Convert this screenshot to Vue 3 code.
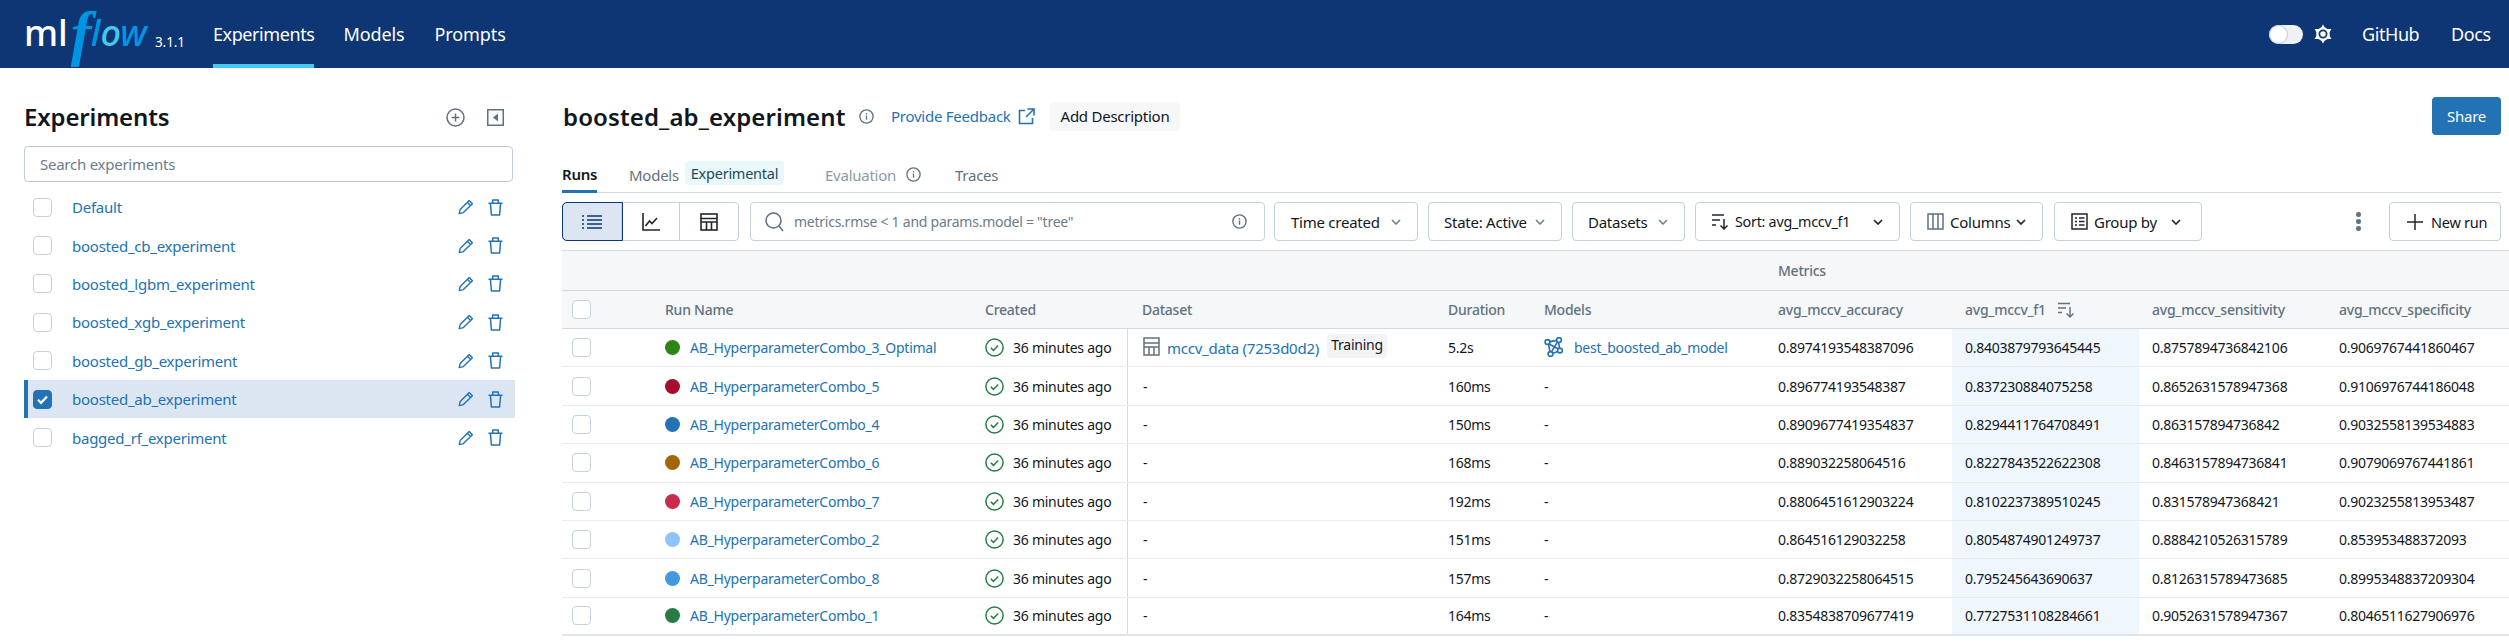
<script setup>
const experiments = [
  { name: 'Default' },
  { name: 'boosted_cb_experiment' },
  { name: 'boosted_lgbm_experiment' },
  { name: 'boosted_xgb_experiment' },
  { name: 'boosted_gb_experiment' },
  { name: 'boosted_ab_experiment', selected: true },
  { name: 'bagged_rf_experiment' }
]
const runs = [
  { name: 'AB_HyperparameterCombo_3_Optimal', color: '#2e8412', duration: '5.2s', first: true, m: ['0.8974193548387096', '0.8403879793645445', '0.8757894736842106', '0.9069767441860467'] },
  { name: 'AB_HyperparameterCombo_5', color: '#a50f2d', duration: '160ms', m: ['0.896774193548387', '0.837230884075258', '0.8652631578947368', '0.9106976744186048'] },
  { name: 'AB_HyperparameterCombo_4', color: '#2272b4', duration: '150ms', m: ['0.8909677419354837', '0.8294411764708491', '0.863157894736842', '0.9032558139534883'] },
  { name: 'AB_HyperparameterCombo_6', color: '#a4640a', duration: '168ms', m: ['0.889032258064516', '0.8227843522622308', '0.8463157894736841', '0.9079069767441861'] },
  { name: 'AB_HyperparameterCombo_7', color: '#c92b4b', duration: '192ms', m: ['0.8806451612903224', '0.8102237389510245', '0.831578947368421', '0.9023255813953487'] },
  { name: 'AB_HyperparameterCombo_2', color: '#8cc4fb', duration: '151ms', m: ['0.864516129032258', '0.8054874901249737', '0.8884210526315789', '0.853953488372093'] },
  { name: 'AB_HyperparameterCombo_8', color: '#4299e0', duration: '157ms', m: ['0.8729032258064515', '0.795245643690637', '0.8126315789473685', '0.8995348837209304'] },
  { name: 'AB_HyperparameterCombo_1', color: '#277c43', duration: '164ms', m: ['0.8354838709677419', '0.7727531108284661', '0.9052631578947367', '0.8046511627906976'] }
]
</script>

<template>
  <div class="page">
    <header class="topbar">
      <div class="logo">
        <span class="ml">ml</span><span class="flow-f">f</span><span class="flow">l<span class="flow-o">o</span>w</span>
      </div>
      <span class="version">3.1.1</span>
      <nav class="nav">
        <a class="nav-item active">Experiments</a>
        <a class="nav-item">Models</a>
        <a class="nav-item">Prompts</a>
      </nav>
      <div class="top-right">
        <span class="toggle"><span class="knob"></span></span>
        <svg class="gear" width="20" height="20" viewBox="0 0 20 20">
          <polygon points="10,0.5 18.4,15 1.6,15" fill="#fff" />
          <polygon points="10,19.5 18.4,5 1.6,5" fill="#fff" />
          <circle cx="10" cy="10" r="6.8" fill="#fff" />
          <circle cx="10" cy="10" r="3.6" fill="none" stroke="#0e3574" stroke-width="1.8" />
        </svg>
        <a class="top-link github">GitHub</a>
        <a class="top-link docs">Docs</a>
      </div>
    </header>

    <div class="body">
      <aside class="sidebar">
        <div class="side-head">
          <h2 class="side-title">Experiments</h2>
          <svg width="19" height="19" viewBox="0 0 19 19" fill="none" stroke="#5f7281" stroke-width="1.5">
            <circle cx="9.5" cy="9.5" r="8.5" />
            <path d="M9.5 5.5v8M5.5 9.5h8" />
          </svg>
          <svg class="collapse" width="17" height="17" viewBox="0 0 17 17">
            <rect x="0.75" y="0.75" width="15.5" height="15.5" fill="none" stroke="#5f7281" stroke-width="1.5" />
            <path d="M11 4.5v8l-5-4z" fill="#5f7281" />
          </svg>
        </div>
        <div class="side-search">Search experiments</div>
        <div class="exp-list">
          <div v-for="e in experiments" :key="e.name" class="exp-row" :class="{ selected: e.selected }">
            <span class="cb" :class="{ checked: e.selected }">
              <svg v-if="e.selected" width="13" height="13" viewBox="0 0 13 13" fill="none" stroke="#fff" stroke-width="2.2"><path d="M2 6.8l3 3 6-6.4" /></svg>
            </span>
            <a class="exp-name">{{ e.name }}</a>
            <span class="exp-actions">
              <svg width="16" height="16" viewBox="0 0 16 16" fill="none" stroke="#2272b4" stroke-width="1.4" stroke-linejoin="round">
                <path d="M11.2 1.6l3.2 3.2-9 8.8-4.2 1 1-4.2z" />
                <path d="M9.6 3.4l3 3" />
              </svg>
              <svg width="15" height="17" viewBox="0 0 15 17" fill="none" stroke="#2272b4" stroke-width="1.5" stroke-linejoin="round">
                <path d="M4.7 4V1h5.6v3M0.5 4.2h14M2.4 4.2l1 11.8h8.2l1-11.8" />
              </svg>
            </span>
          </div>
        </div>
      </aside>

      <main class="main">
        <div class="title-row">
          <h1 class="title">boosted_ab_experiment</h1>
          <svg class="title-info" width="15" height="15" viewBox="0 0 15 15" fill="none" stroke="#5f7281" stroke-width="1.3">
            <circle cx="7.5" cy="7.5" r="6.6" /><path d="M7.5 6.5v4.2M7.5 4v1.6" />
          </svg>
          <a class="feedback">Provide Feedback</a>
          <svg class="ext" width="17" height="17" viewBox="0 0 17 17" fill="none" stroke="#2272b4" stroke-width="1.6">
            <path d="M7 2.5H1.5v13h13V10M9.5 1h6.5v6.5M16 1L8 9" />
          </svg>
          <span class="add-desc">Add Description</span>
          <button class="share">Share</button>
        </div>

        <div class="tabs">
          <span class="tab tab-active">Runs</span>
          <span class="tab tab-models">Models</span>
          <span class="exp-tag">Experimental</span>
          <span class="tab tab-eval">Evaluation</span>
          <svg class="eval-info" width="15" height="15" viewBox="0 0 15 15" fill="none" stroke="#5f7281" stroke-width="1.3">
            <circle cx="7.5" cy="7.5" r="6.6" /><path d="M7.5 6.5v4.2M7.5 4v1.6" />
          </svg>
          <span class="tab tab-traces">Traces</span>
        </div>

        <div class="toolbar">
          <div class="seg-group">
            <span class="seg seg-on">
              <svg width="20" height="16" viewBox="0 0 20 16" fill="none" stroke="#0e3574" stroke-width="1.6">
                <path d="M5 2h15M5 6h15M5 10h15M5 14h15" />
                <path d="M0 2h2M0 6h2M0 10h2M0 14h2" />
              </svg>
            </span>
            <span class="seg">
              <svg width="18" height="18" viewBox="0 0 18 18" fill="none" stroke="#1f272d" stroke-width="1.6">
                <path d="M1 0v17h17" />
                <path d="M3.5 13l4-5 2.5 2.5 5-5.5" />
              </svg>
            </span>
            <span class="seg">
              <svg width="18" height="18" viewBox="0 0 18 18" fill="none" stroke="#1f272d" stroke-width="1.6">
                <rect x="1" y="1" width="16" height="16" />
                <path d="M1 5.5h16M1 9h16M6.5 9v8M11.5 9v8" />
              </svg>
            </span>
          </div>
          <div class="run-search">
            <svg width="19" height="20" viewBox="0 0 19 20" fill="none" stroke="#5f7281" stroke-width="1.6">
              <circle cx="8.5" cy="8.5" r="7.5" /><path d="M14 14l4 5" />
            </svg>
            <span class="search-text">metrics.rmse &lt; 1 and params.model = "tree"</span>
            <svg class="search-info" width="15" height="15" viewBox="0 0 15 15" fill="none" stroke="#5f7281" stroke-width="1.4">
              <circle cx="7.5" cy="7.5" r="6.6" /><path d="M7.5 6.5v4.2M7.5 4v1.6" />
            </svg>
          </div>
          <button class="btn w-time">Time created
            <svg class="chev" width="10" height="6" viewBox="0 0 10 6" fill="none" stroke="#6b7c8a" stroke-width="1.5"><path d="M1 1l4 4 4-4" /></svg>
          </button>
          <button class="btn w-state">State: Active
            <svg class="chev" width="10" height="6" viewBox="0 0 10 6" fill="none" stroke="#6b7c8a" stroke-width="1.5"><path d="M1 1l4 4 4-4" /></svg>
          </button>
          <button class="btn w-data">Datasets
            <svg class="chev" width="10" height="6" viewBox="0 0 10 6" fill="none" stroke="#6b7c8a" stroke-width="1.5"><path d="M1 1l4 4 4-4" /></svg>
          </button>
          <button class="btn w-sort">
            <svg width="17" height="17" viewBox="0 0 17 17" fill="none" stroke="#1f272d" stroke-width="1.5">
              <path d="M0 2h12M0 7h8M0 12h4M12 6v10M8.5 12.5l3.5 3.5 3.5-3.5" />
            </svg>
            <span>Sort: avg_mccv_f1</span>
            <svg class="chev" width="10" height="6" viewBox="0 0 10 6" fill="none" stroke="#1f272d" stroke-width="1.7"><path d="M1 1l4 4 4-4" /></svg>
          </button>
          <button class="btn w-cols">
            <svg width="17" height="17" viewBox="0 0 17 17" fill="none" stroke="#5f7281" stroke-width="1.5">
              <rect x="1" y="1" width="15" height="15" /><path d="M6 1v15M11 1v15" />
            </svg>
            <span>Columns</span>
            <svg class="chev chev-cols" width="10" height="6" viewBox="0 0 10 6" fill="none" stroke="#1f272d" stroke-width="1.7"><path d="M1 1l4 4 4-4" /></svg>
          </button>
          <button class="btn w-group">
            <svg width="17" height="17" viewBox="0 0 17 17" fill="none" stroke="#1f272d" stroke-width="1.5">
              <rect x="1" y="1" width="15" height="15" /><path d="M4 5h2M8 5h5.5M4 8.5h2M8 8.5h5.5M4 12h2M8 12h5.5" />
            </svg>
            <span>Group by</span>
            <svg class="chev chev-group" width="10" height="6" viewBox="0 0 10 6" fill="none" stroke="#1f272d" stroke-width="1.7"><path d="M1 1l4 4 4-4" /></svg>
          </button>
          <span class="kebab"><i></i><i></i><i></i></span>
          <button class="btn w-new">
            <svg width="18" height="18" viewBox="0 0 18 18" fill="none" stroke="#1f272d" stroke-width="1.5"><path d="M9 1v16M1 9h16" /></svg>
            <span>New run</span>
          </button>
        </div>

        <div class="table">
          <div class="group-row"><span class="metrics-label">Metrics</span></div>
          <div class="grid head-row">
            <span class="cell"><span class="cb cb-head"></span></span>
            <span class="cell">Run Name</span>
            <span class="cell">Created</span>
            <span class="cell cell-data">Dataset</span>
            <span class="cell">Duration</span>
            <span class="cell">Models</span>
            <span class="cell">avg_mccv_accuracy</span>
            <span class="cell">avg_mccv_f1
              <svg class="head-sort" width="17" height="16" viewBox="0 0 17 16" fill="none" stroke="#5f7281" stroke-width="1.4">
                <path d="M0 1.5h12M0 6h8M0 10.5h4M12 5v10M8.5 11.5l3.5 3.5 3.5-3.5" />
              </svg>
            </span>
            <span class="cell">avg_mccv_sensitivity</span>
            <span class="cell">avg_mccv_specificity</span>
          </div>
          <div v-for="r in runs" :key="r.name" class="grid run-row">
            <span class="cell"><span class="cb cb-head"></span></span>
            <span class="cell">
              <i class="dot" :style="{ background: r.color }"></i>
              <a class="link">{{ r.name }}</a>
            </span>
            <span class="cell">
              <svg class="ok" width="19" height="19" viewBox="0 0 19 19" fill="none" stroke="#277c43" stroke-width="1.5">
                <circle cx="9.5" cy="9.5" r="8.6" /><path d="M5.8 9.8l2.6 2.6 4.8-5" />
              </svg>
              36 minutes ago
            </span>
            <span class="cell cell-data divider">
              <template v-if="r.first">
                <svg class="table-ico" width="17" height="19" viewBox="0 0 17 19" fill="none" stroke="#5f7281" stroke-width="1.5">
                  <rect x="1" y="1" width="15" height="17" /><path d="M1 6h15M1 10h15M6 10v8M11 10v8" />
                </svg>
                <a class="link data-link">mccv_data (7253d0d2)</a>
                <span class="ctx">Training</span>
              </template>
              <template v-else>-</template>
            </span>
            <span class="cell">{{ r.duration }}</span>
            <span class="cell">
              <template v-if="r.first">
                <svg class="model-ico" width="19" height="20" viewBox="0 0 19 20" fill="none" stroke="#2272b4" stroke-width="1.6">
                  <circle cx="3.5" cy="5" r="2.4" /><circle cx="15" cy="3" r="2.4" /><circle cx="16" cy="13.5" r="2.4" /><circle cx="6.5" cy="17" r="2.4" />
                  <path d="M5.8 4.6l6.9-1.2M5 7l9.5 5M14.6 5.3l.9 5.8M13.8 14.4l-5 1.8M4.5 7.3l1.5 7.3M13.5 4.8l-6 10" />
                </svg>
                <a class="link">best_boosted_ab_model</a>
              </template>
              <template v-else>-</template>
            </span>
            <span class="cell">{{ r.m[0] }}</span>
            <span class="cell sorted">{{ r.m[1] }}</span>
            <span class="cell">{{ r.m[2] }}</span>
            <span class="cell">{{ r.m[3] }}</span>
          </div>
        </div>
      </main>
    </div>
  </div>
</template>

<style>
html, body { margin: 0; overflow: hidden; background: #fff; }
</style>

<style scoped>
.page {
  width: 2509px;
  height: 643px;
  overflow: hidden;
  font-family: "Noto Sans", "Open Sans", sans-serif;
  font-size: 14px;
  letter-spacing: -0.25px;
  color: #11171c;
}
a { color: #2272b4; }
svg { flex: none; display: block; }

/* Top bar */
.topbar {
  height: 68px;
  background: #0e3574;
  display: flex;
  align-items: center;
  color: #fff;
  box-sizing: border-box;
  padding-left: 24px;
  padding-right: 17px;
}
.logo { width: 123px; height: 68px; display: flex; align-items: center; letter-spacing: 0; white-space: nowrap; }
.ml { font-size: 36px; font-weight: 500; color: #fff; line-height: 1; margin-top: -3px; }
.flow-f {
  font-family: "Liberation Serif", serif;
  font-style: italic;
  font-weight: 700;
  font-size: 62px;
  line-height: 1;
  color: #0194e2;
  margin-left: 3px;
  margin-top: -2px;
  width: 20px;
}
.flow { font-size: 36px; font-style: italic; font-weight: 500; color: #0194e2; line-height: 1; margin-top: -3px; }
.flow-o { color: #43c9ed; }
.version { font-size: 13.5px; margin-left: 8px; margin-top: 15px; letter-spacing: -0.1px; width: 30px; }
.nav { display: flex; margin-left: 28px; height: 68px; }
.nav-item {
  color: #fff;
  font-size: 18px;
  letter-spacing: -0.1px;
  line-height: 68px;
  margin-right: 30px;
  box-sizing: border-box;
  height: 68px;
}
.nav-item.active { border-bottom: 4px solid #43c9ed; letter-spacing: -0.42px; margin-right: 29px; }
.top-right { margin-left: auto; display: flex; align-items: center; }
.toggle {
  width: 34px;
  height: 19px;
  border-radius: 10px;
  background: #eef1f5;
  display: block;
  position: relative;
}
.knob {
  position: absolute;
  left: 0;
  top: 0;
  width: 17px;
  height: 17px;
  border: 1px solid #bcc9d6;
  background: #fff;
  border-radius: 50%;
}
.gear { margin-left: 10px; }
.top-link { color: #fff; font-size: 18px; letter-spacing: -0.42px; white-space: nowrap; }
.github { margin-left: 29px; margin-right: 30px; width: 59px; }
.docs { width: 41px; }

/* Body */
.body { display: flex; }

.sidebar { width: 562px; flex: none; box-sizing: border-box; padding: 33px 0 0 24px; }
.side-head { width: 480px; height: 32px; display: flex; align-items: center; }
.side-title { font-size: 24px; font-weight: 600; margin: 0; flex: 1; letter-spacing: -0.15px; line-height: 32px; }
.collapse { margin-left: 22px; }
.side-search {
  width: 489px;
  height: 36px;
  margin-top: 13px;
  box-sizing: border-box;
  border: 1px solid #c0cdd8;
  border-radius: 4px;
  line-height: 34px;
  padding-left: 15px;
  color: #6b7c8a;
  font-size: 15px;
}
.exp-list { margin-top: 6px; width: 491px; }
.exp-row {
  height: 38.4px;
  display: flex;
  align-items: center;
  box-sizing: border-box;
  padding: 0 12px 0 9px;
}
.exp-row.selected { background: #dbe6f2; border-left: 4px solid #2272b4; padding-left: 5px; }
.cb {
  width: 19px;
  height: 19px;
  box-sizing: border-box;
  border: 1.5px solid #c4d0dc;
  border-radius: 4px;
  background: #fff;
  flex: none;
  display: flex;
  align-items: center;
  justify-content: center;
}
.cb.checked { background: #2272b4; border-color: #2272b4; }
.exp-name { margin-left: 20px; font-size: 15px; }
.exp-actions { margin-left: auto; display: flex; align-items: center; gap: 14px; }

/* Main */
.main { width: 1939px; flex: none; padding-top: 29px; box-sizing: border-box; }
.title-row { height: 38px; display: flex; align-items: center; padding-left: 1px; }
.title { font-size: 24px; font-weight: 600; margin: 0; letter-spacing: 0.12px; width: 285px; white-space: nowrap; }
.title-info { margin-left: 11px; }
.feedback { margin-left: 17px; width: 121px; white-space: nowrap; font-size: 15px; }
.ext { margin-left: 6px; }
.add-desc {
  margin-left: 15px;
  width: 130px;
  height: 29px;
  background: #f6f7f9;
  border-radius: 4px;
  text-align: center;
  line-height: 29px;
  white-space: nowrap;
  font-size: 15px;
}
.share {
  margin-left: auto;
  width: 69px;
  height: 38px;
  background: #2272b4;
  color: #fff;
  border: 0;
  border-radius: 4px;
  font: inherit;
  font-size: 15px;
  letter-spacing: inherit;
}
.tabs {
  height: 58px;
  box-sizing: border-box;
  border-bottom: 1px solid #d1d9e1;
  display: flex;
  align-items: flex-end;
  position: relative;
  font-size: 15px;
}
.tab { line-height: 20px; padding-bottom: 7px; color: #5f7281; white-space: nowrap; }
.tab-active { color: #11171c; font-weight: 600; width: 35px; margin-bottom: -1px; padding-bottom: 6px; border-bottom: 3px solid #2272b4; }
.tab-models { margin-left: 32px; width: 56px; }
.exp-tag {
  width: 99px;
  height: 24px;
  margin-bottom: 7px;
  background: #e8f8fb;
  border-radius: 4px;
  line-height: 24px;
  text-align: center;
  color: #1f4a56;
  white-space: nowrap;
  font-size: 14.5px;
}
.tab-eval { margin-left: 41px; color: #8c9aa6; width: 82px; }
.eval-info { margin-bottom: 10px; margin-left: -1px; }
.tab-traces { margin-left: 34px; }

.toolbar { display: flex; align-items: center; margin-top: 9px; height: 39px; padding-right: 8px; }
.seg-group { display: flex; width: 177px; height: 39px; box-sizing: border-box; border: 1px solid #c4d0dc; border-radius: 4px; flex: none; }
.seg {
  flex: 1;
  display: flex;
  align-items: center;
  justify-content: center;
  border-right: 1px solid #c4d0dc;
}
.seg:last-child { border-right: 0; }
.seg-on { background: #dbe6f2; outline: 1px solid #0e3574; border-radius: 4px 0 0 4px; }
.run-search {
  margin-left: 11px;
  width: 515px;
  height: 39px;
  box-sizing: border-box;
  border: 1px solid #c4d0dc;
  border-radius: 4px;
  display: flex;
  align-items: center;
  padding-left: 14px;
  flex: none;
}
.search-text { margin-left: 10px; color: #6b7c8a; white-space: nowrap; }
.search-info { margin-left: auto; margin-right: 17px; }
.btn {
  height: 39px;
  box-sizing: border-box;
  background: #fff;
  border: 1px solid #c4d0dc;
  border-radius: 4px;
  font: inherit;
  font-size: 15px;
  letter-spacing: inherit;
  color: #11171c;
  display: flex;
  align-items: center;
  padding: 0 0 0 16px;
  white-space: nowrap;
  flex: none;
  margin-left: 10px;
}
.chev { margin-left: auto; margin-right: 16px; }
.w-time { width: 144px; margin-left: 9px; }
.w-state { width: 134px; padding-left: 15px; }
.w-data { width: 113px; padding-left: 15px; }
.w-sort { width: 205px; gap: 6px; font-size: 14.3px; }
.w-cols { width: 133px; gap: 6px; }
.chev-cols { margin-left: 0; }
.w-group { width: 148px; gap: 6px; margin-left: 11px; }
.chev-group { margin-right: 20px; }
.kebab { display: flex; flex-direction: column; gap: 2.5px; margin-left: 154px; width: 5px; flex: none; align-items: center; }
.kebab i { width: 4.5px; height: 4.5px; border-radius: 50%; background: #5f7281; display: block; }
.w-new { width: 112px; margin-left: 28px; gap: 7px; font-size: 14.5px; }

.table { margin-top: 9px; width: 1947px; overflow: hidden; }
.group-row {
  height: 41px;
  box-sizing: border-box;
  background: #f6f7f9;
  border-top: 1px solid #d1d9e1;
  border-bottom: 1px solid #d1d9e1;
  padding-left: 1216px;
  line-height: 39px;
  color: #5f7281;
  font-weight: 500;
}
.grid {
  display: grid;
  grid-template-columns: 90px 320px 155px 308px 96px 234px 187px 187px 187px 187px;
  box-sizing: border-box;
  width: 2000px;
}
.cell {
  display: flex;
  align-items: center;
  padding-left: 13px;
  white-space: nowrap;
  min-width: 0;
}
.cell-data { padding-left: 15px; }
.head-row {
  height: 38px;
  background: #f6f7f9;
  border-bottom: 1px solid #d1d9e1;
  color: #5f7281;
  font-weight: 500;
}
.head-row .cell:first-child, .run-row .cell:first-child { padding-left: 10px; }
.head-sort { margin-left: 12px; }
.run-row { height: 38.4px; border-bottom: 1px solid #e8ecf0; }
.run-row:last-child { border-bottom: 2px solid #dfe5eb; }
.divider { border-left: 1px solid #d1d9e1; }
.dot { width: 15px; height: 15px; border-radius: 50%; flex: none; margin-right: 10px; }
.ok { margin-right: 9px; }
.table-ico { margin-right: 7px; margin-top: -3px; }
.data-link { font-size: 15px; }
.model-ico { margin-right: 11px; margin-top: -2px; }
.ctx {
  margin-left: 8px;
  width: 60px;
  height: 24px;
  background: #f2f3f5;
  border-radius: 4px;
  line-height: 22px;
  text-align: center;
  margin-top: -3px;
}
.sorted { background: #eff6fc; }
</style>
